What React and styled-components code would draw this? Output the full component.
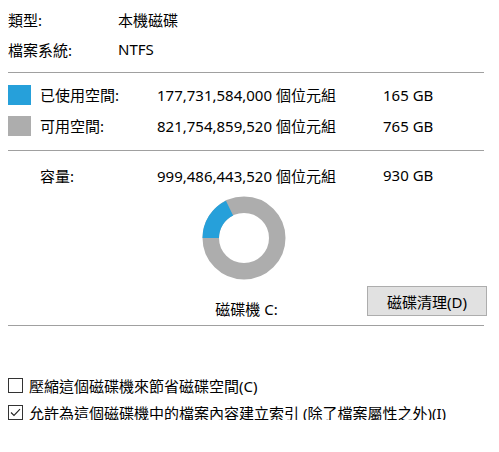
import React from 'react';
import styled, {createGlobalStyle} from 'styled-components';

const GlobalStyle = createGlobalStyle`
    body {
        margin: 0;
        background: #fff;
        font-family: 'Noto Sans', 'Noto Sans CJK TC', sans-serif;
        font-size: 15px;
        color: #000;
    }
`;

const usedBytes = 177731584000;
const totalBytes = 999486443520;

function Donut() {
    const r = 33.25;
    const c = 2 * Math.PI * r;
    const used = c * usedBytes / totalBytes;
    return (
        <svg width="84" height="84" viewBox="0 0 84 84">
            <circle cx="42" cy="42" r={r} fill="none" stroke="#adadad" strokeWidth="16.5" />
            <circle cx="42" cy="42" r={r} fill="none" stroke="#26a0da" strokeWidth="16.5"
                    strokeDasharray={`${used} ${c}`} transform="rotate(180 42 42)" />
        </svg>
    );
}

function Check({checked}) {
    return (
        <Box>
            {checked && (
                <svg width="13" height="13" viewBox="0 0 13 13">
                    <path d="M2 6.5 L5 9.5 L11 3.2" fill="none" stroke="#222" strokeWidth="1.1" />
                </svg>
            )}
        </Box>
    );
}

function App() {
    return (
        <Page>
            <GlobalStyle />
            <InfoRow><span>類型:</span><span>本機磁碟</span></InfoRow>
            <InfoRow><span>檔案系統:</span><span>NTFS</span></InfoRow>
            <Separator />

            <SpaceGrid>
                <Swatch color="#26a0da" />
                <span>已使用空間:</span>
                <span>177,731,584,000 個位元組</span>
                <span>165 GB</span>

                <Swatch color="#adadad" />
                <span>可用空間:</span>
                <span>821,754,859,520 個位元組</span>
                <span>765 GB</span>
            </SpaceGrid>
            <Separator top={9} />

            <CapacityGrid>
                <span />
                <span>容量:</span>
                <span>999,486,443,520 個位元組</span>
                <span>930 GB</span>
            </CapacityGrid>

            <Chart><Donut /></Chart>

            <DriveRow>
                <span />
                <DriveLabel>磁碟機 C:</DriveLabel>
                <CleanButton>磁碟清理(D)</CleanButton>
            </DriveRow>
            <Separator top={9} />

            <Options>
                <Option><Check /><span>壓縮這個磁碟機來節省磁碟空間(C)</span></Option>
                <Option><Check checked /><span>允許為這個磁碟機中的檔案內容建立索引 (除了檔案屬性之外)(I)</span></Option>
            </Options>
        </Page>
    );
}

export default App;

const Page = styled.div`
    width: 476px;
    padding: 4px 0 0 8px;
    display: flex;
    flex-direction: column;
`;

const InfoRow = styled.div`
    display: grid;
    grid-template-columns: 110px 1fr;
    height: 30px;
    align-items: center;
`;

const Separator = styled.div`
    height: 1px;
    background: #a0a0a0;
    margin-top: ${p => p.top ?? 8}px;
`;

const SpaceGrid = styled.div`
    display: grid;
    grid-template-columns: 32px 117px 226px 1fr;
    grid-auto-rows: 31px;
    align-items: center;
    margin-top: 6px;
    white-space: nowrap;
`;

const CapacityGrid = styled(SpaceGrid)`
    grid-auto-rows: 30px;
    margin-top: 9px;
`;

const Swatch = styled.div`
    width: 23px;
    height: 20px;
    background: ${p => p.color};
`;

const Chart = styled.div`
    display: flex;
    justify-content: center;
    padding-right: 4px;
    margin-top: 6px;
`;

const DriveRow = styled.div`
    display: grid;
    grid-template-columns: 1fr auto 1fr;
    align-items: end;
    margin-top: 6px;
    margin-right: -3px;
`;

const DriveLabel = styled.span`
    line-height: 18px;
    margin-bottom: -2px;
    padding-right: 2px;
`;

const CleanButton = styled.button`
    justify-self: end;
    width: 120px;
    height: 30px;
    background: #e1e1e1;
    border: 1px solid #adadad;
    font: inherit;
    color: #000;
    padding: 0;
`;

const Options = styled.div`
    display: flex;
    flex-direction: column;
    gap: 11px;
    margin-top: 51px;
`;

const Option = styled.label`
    display: flex;
    align-items: center;
    gap: 6px;
    height: 16px;
    white-space: nowrap;
`;

const Box = styled.span`
    width: 13px;
    height: 13px;
    border: 1px solid #333;
    display: flex;
    align-items: center;
    justify-content: center;
    flex: none;
`;
